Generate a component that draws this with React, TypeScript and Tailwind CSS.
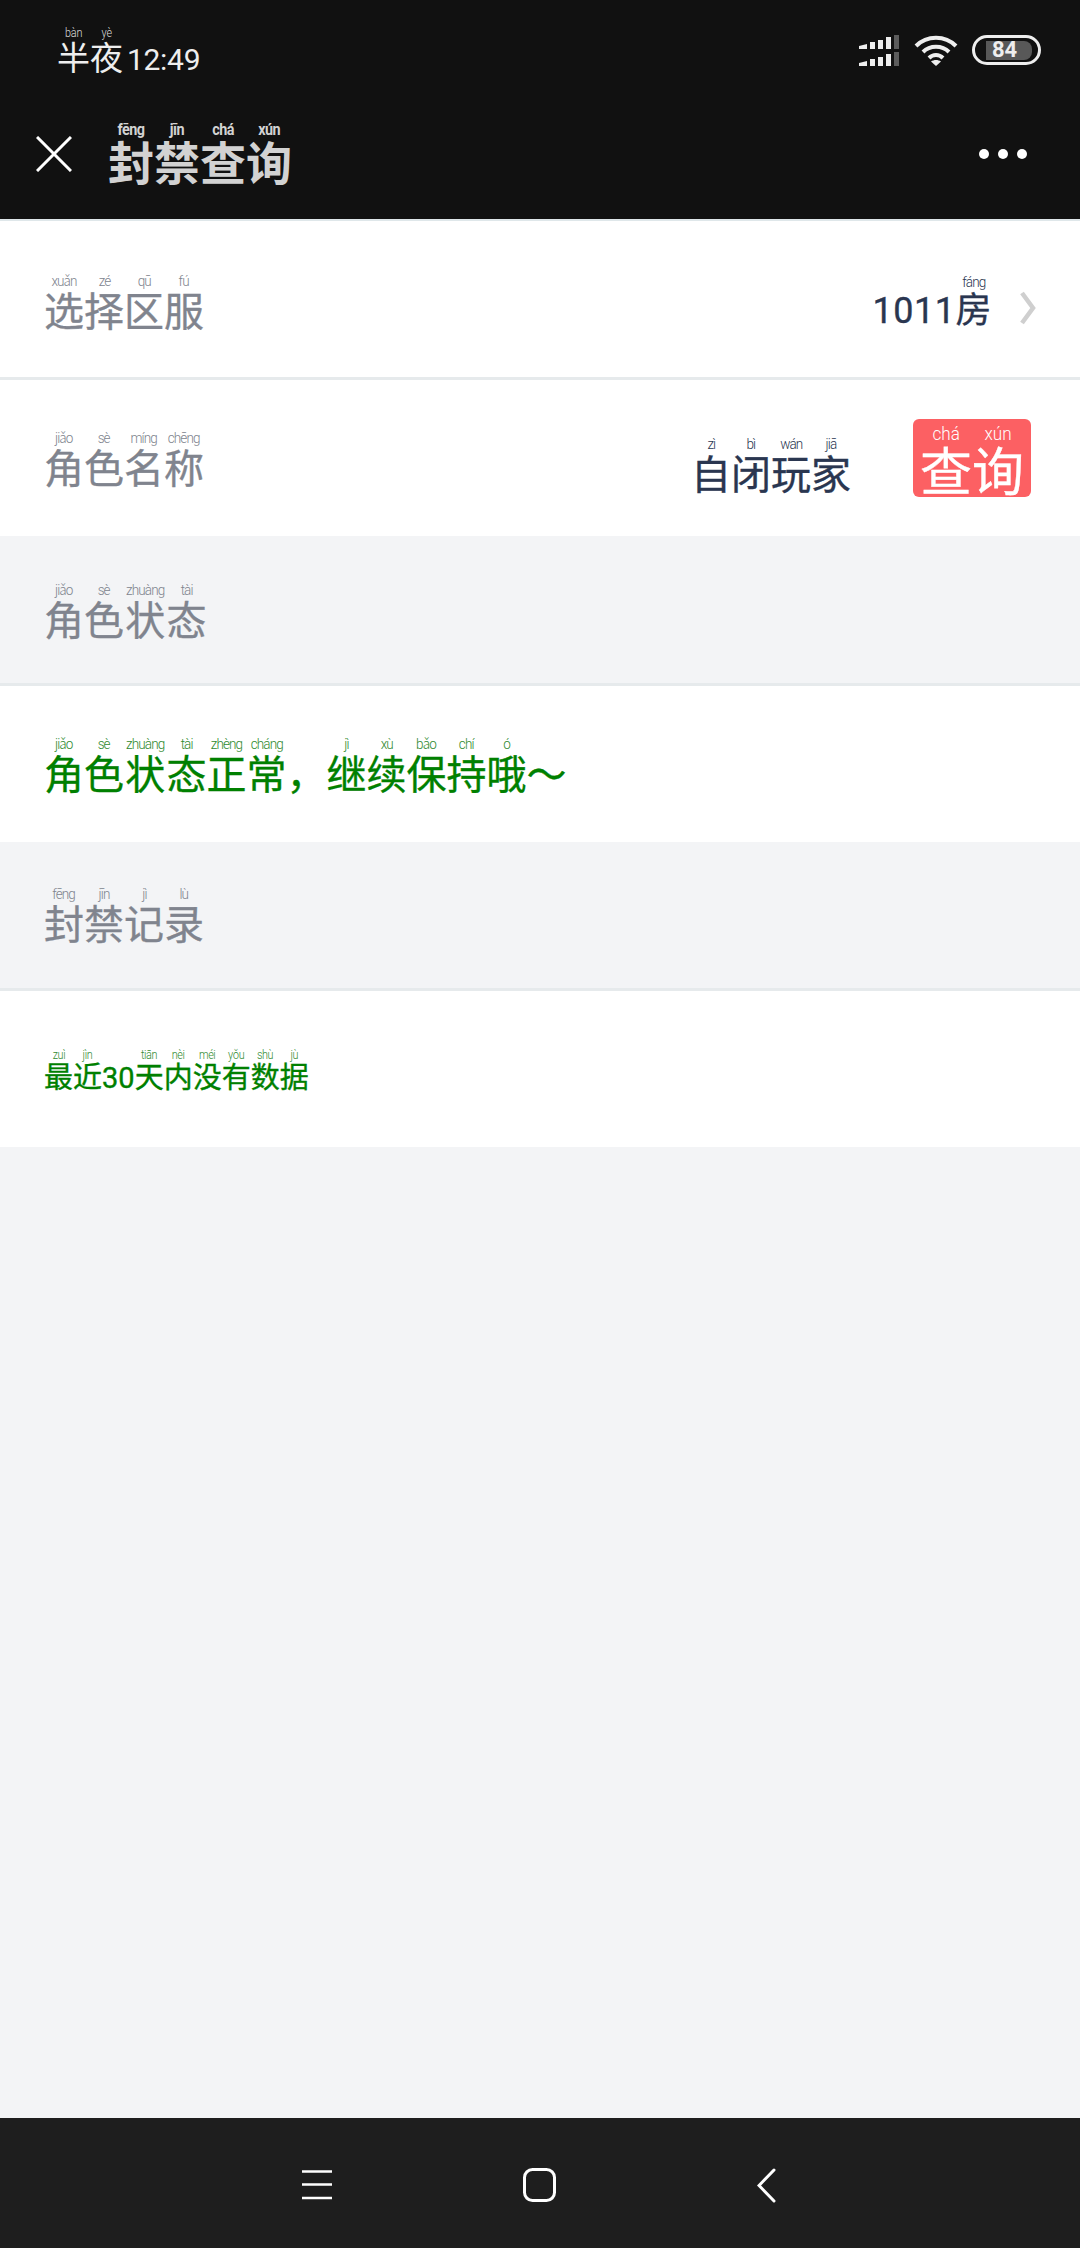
const FONT = "font-['Roboto','Noto_Sans_CJK_SC',sans-serif]";

type Part = string | [string, string];

function Ruby({ parts, rtClass }: { parts: Part[]; rtClass: string }) {
  return (
    <>
      {parts.map((part, i) =>
        typeof part === "string" ? (
          <span key={i}>{part}</span>
        ) : (
          <ruby key={i}>
            {part[0]}
            <rt className={`[-webkit-text-stroke:0] ${rtClass}`}>
              <span className="inline-block scale-x-90">{part[1]}</span>
            </rt>
          </ruby>
        )
      )}
    </>
  );
}

const PINYIN = "text-[15px] font-light tracking-[-1px]";
// noto regular is a little thin against the reference, medium far too heavy
const STROKE = "[-webkit-text-stroke:0.35px_currentColor]";

function SignalBars({ y }: { y: number }) {
  const base = y + 14;
  return (
    <g>
      <path d={`M0 ${base} V${base - 3} L8 ${base - 5} V${base} Z`} fill="#eeeeee" />
      <rect x="11" y={base - 7} width="5" height="7" fill="#eeeeee" />
      <rect x="19" y={base - 9} width="5" height="9" fill="#eeeeee" />
      <rect x="27" y={base - 12} width="5" height="12" fill="#eeeeee" />
      <rect x="35" y={base - 14} width="5" height="14" fill="#5c5c5c" />
    </g>
  );
}

function StatusIcons() {
  return (
    <div className="flex items-start">
      <svg width="40" height="32" viewBox="0 0 40 32">
        <SignalBars y={0} />
        <SignalBars y={17} />
      </svg>
      <svg className="ml-[15px]" width="44" height="32" viewBox="0 0 44 32" fill="none" stroke="#eeeeee" strokeWidth="4">
        <path d="M2 11 C13 0 31 0 42 11" />
        <path d="M9 17 C16 10 28 10 35 17" />
        <path d="M15 23 C19 19 25 19 29 23" />
        <path d="M22 31 L17 26.5 C20 24.5 24 24.5 27 26.5 Z" fill="#eeeeee" stroke="none" />
      </svg>
      <div className="ml-[14px] flex h-[30px] w-[69px] items-center rounded-full border-[3px] border-[#eeeeee] pl-[11px]">
        <div className="flex h-[19px] w-[46px] items-center rounded-r-[8px] bg-[#585858] pl-[6px] text-[22px] font-bold leading-none text-[#eeeeee]">
          84
        </div>
      </div>
    </div>
  );
}

function Row({
  tone = "white",
  border = false,
  h,
  children,
}: {
  tone?: "white" | "gray";
  border?: boolean;
  h: string;
  children: React.ReactNode;
}) {
  return (
    <div
      className={`flex items-center justify-between pl-[44px] ${h} ${tone === "white" ? "bg-white" : "bg-[#f3f4f6]"} ${
        border ? "border-b-[3px] border-[#e6eaec]" : ""
      }`}
    >
      {children}
    </div>
  );
}

function Label({ parts }: { parts: Part[] }) {
  return (
    <div className={`text-[40px] leading-none text-[#80848e] ${STROKE}`}>
      <Ruby parts={parts} rtClass={`${PINYIN} text-[#80848e]`} />
    </div>
  );
}

export default function App() {
  return (
    <div className={`flex h-[2248px] w-[1080px] flex-col bg-[#f3f4f6] ${FONT}`}>
      <header className="h-[221px] shrink-0 border-b-2 border-[#dfe7ea] bg-[#111111]">
        <div className="flex h-[88px] items-start justify-between pl-[57px] pr-[39px] pt-[35px]">
          <div className="-mt-[9px] text-[33px] leading-none text-[#eeeeee]">
            <Ruby parts={[["半", "bàn"], ["夜", "yè"]]} rtClass="text-[12px] font-light tracking-[-0.2px] text-[#dddddd]" />
            <span className="ml-[4px] text-[30px] tracking-[-0.3px]">12:49</span>
          </div>
          <StatusIcons />
        </div>
        <div className="flex h-[131px] items-center justify-between pl-[36px] pr-[53px]">
          <div className="flex items-center">
            <svg width="36" height="36" viewBox="0 0 36 36" stroke="#ffffff" strokeWidth="3">
              <path d="M1 1 L35 35 M35 1 L1 35" />
            </svg>
            <div className="ml-[36px] text-[46px] font-bold leading-none text-[#d2d2d2]">
              <Ruby
                parts={[["封", "fēng"], ["禁", "jīn"], ["查", "chá"], ["询", "xún"]]}
                rtClass="text-[16px] font-bold tracking-[-0.6px] text-[#d2d2d2]"
              />
            </div>
          </div>
          <div className="flex gap-[9px]">
            <span className="size-[10px] rounded-full bg-white" />
            <span className="size-[10px] rounded-full bg-white" />
            <span className="size-[10px] rounded-full bg-white" />
          </div>
        </div>
      </header>

      <Row h="h-[159px] pt-[4px]" border>
        <Label parts={[["选", "xuǎn"], ["择", "zé"], ["区", "qū"], ["服", "fú"]]} />
        <div className="flex items-center pr-[44px]">
          <div className={`pt-[4px] text-[36px] leading-none tracking-[0.5px] text-[#2a3650] ${STROKE}`}>
            <Ruby parts={["1011", ["房", "fáng"]]} rtClass={`${PINYIN} text-[#2a3650]`} />
          </div>
          <svg className="ml-[28px] mt-[14px]" width="16" height="34" viewBox="0 0 16 34" fill="none" stroke="#cfcfcf" strokeWidth="4.5">
            <path d="M2 2 L13 17 L2 32" />
          </svg>
        </div>
      </Row>

      <Row h="h-[156px]">
        <Label parts={[["角", "jiǎo"], ["色", "sè"], ["名", "míng"], ["称", "chēng"]]} />
        <div className="flex items-center pr-[49px]">
          <div className={`pt-[36px] text-[40px] leading-none text-[#2a3650] ${STROKE}`}>
            <Ruby parts={[["自", "zì"], ["闭", "bì"], ["玩", "wán"], ["家", "jiā"]]} rtClass={`${PINYIN} text-[#2a3650]`} />
          </div>
          <div className={`ml-[62px] flex h-[78px] w-[118px] items-end justify-center rounded-[6px] bg-[#fc6063] text-[52px] leading-none text-white ${STROKE}`}>
            <div className="-mb-[3px]">
              <Ruby parts={[["查", "chá"], ["询", "xún"]]} rtClass="text-[19px] font-light text-white" />
            </div>
          </div>
        </div>
      </Row>

      <Row h="h-[150px]" tone="gray" border>
        <Label parts={[["角", "jiǎo"], ["色", "sè"], ["状", "zhuàng"], ["态", "tài"]]} />
      </Row>

      <Row h="h-[156px]">
        <div className={`text-[40px] leading-none text-[#008000] ${STROKE}`}>
          <Ruby
            parts={[
              ["角", "jiǎo"],
              ["色", "sè"],
              ["状", "zhuàng"],
              ["态", "tài"],
              ["正", "zhèng"],
              ["常", "cháng"],
              "，",
              ["继", "jì"],
              ["续", "xù"],
              ["保", "bǎo"],
              ["持", "chí"],
              ["哦", "ó"],
              "～",
            ]}
            rtClass={`${PINYIN} text-[#2f8a2f]`}
          />
        </div>
      </Row>

      <Row h="h-[149px]" tone="gray" border>
        <Label parts={[["封", "fēng"], ["禁", "jīn"], ["记", "jì"], ["录", "lù"]]} />
      </Row>

      <Row h="h-[156px]">
        <div className={`text-[29px] leading-none text-[#008000] ${STROKE}`}>
          <Ruby
            parts={[
              ["最", "zuì"],
              ["近", "jìn"],
              "30",
              ["天", "tiān"],
              ["内", "nèi"],
              ["没", "méi"],
              ["有", "yǒu"],
              ["数", "shù"],
              ["据", "jù"],
            ]}
            rtClass="text-[12px] font-light tracking-[-0.4px] text-[#2f8a2f]"
          />
        </div>
      </Row>

      <div className="flex-1" />

      <nav className="flex h-[130px] shrink-0 items-center bg-[#1e1e1e] pl-[302px] pt-[4px]">
        <svg width="30" height="30" viewBox="0 0 30 30" stroke="#ffffff" strokeWidth="2.6">
          <path d="M0 1.5 H30 M0 14.5 H30 M0 28 H30" />
        </svg>
        <svg className="ml-[191px]" width="33" height="34" viewBox="0 0 33 34" fill="none" stroke="#ffffff" strokeWidth="3">
          <rect x="1.5" y="1.5" width="30" height="31" rx="8" />
        </svg>
        <svg className="ml-[201px]" width="19" height="35" viewBox="0 0 19 35" fill="none" stroke="#ffffff" strokeWidth="3" strokeLinecap="round">
          <path d="M17 2 L2 17.5 L17 33" />
        </svg>
      </nav>
    </div>
  );
}
